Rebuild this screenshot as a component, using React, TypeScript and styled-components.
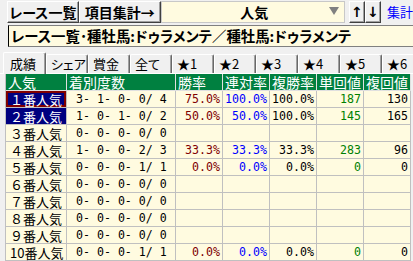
import React from "react";
import styled, { createGlobalStyle } from "styled-components";

const GlobalStyle = createGlobalStyle`
  html, body {
    margin: 0;
    padding: 0;
    background: #f0f0f0;
  }
  body {
    width: 413px;
    height: 261px;
    overflow: hidden;
    font-family: "Noto Sans CJK JP", "Noto Sans", sans-serif;
  }
`;

const JP = `"Noto Sans CJK JP", "Noto Sans", sans-serif`;
const MONO = `"DejaVu Sans Mono", "Liberation Mono", monospace`;

interface Row {
  label: string;
  counts: string;
  win?: string;
  quinella?: string;
  show?: string;
  winReturn?: string;
  showReturn?: string;
}

const rows: Row[] = [
  { label: "１番人気", counts: "3- 1- 0- 0/ 4", win: "75.0%", quinella: "100.0%", show: "100.0%", winReturn: "187", showReturn: "130" },
  { label: "２番人気", counts: "1- 0- 1- 0/ 2", win: "50.0%", quinella: "50.0%", show: "100.0%", winReturn: "145", showReturn: "165" },
  { label: "３番人気", counts: "0- 0- 0- 0/ 0" },
  { label: "４番人気", counts: "1- 0- 0- 2/ 3", win: "33.3%", quinella: "33.3%", show: "33.3%", winReturn: "283", showReturn: "96" },
  { label: "５番人気", counts: "0- 0- 0- 1/ 1", win: "0.0%", quinella: "0.0%", show: "0.0%", winReturn: "0", showReturn: "0" },
  { label: "６番人気", counts: "0- 0- 0- 0/ 0" },
  { label: "７番人気", counts: "0- 0- 0- 0/ 0" },
  { label: "８番人気", counts: "0- 0- 0- 0/ 0" },
  { label: "９番人気", counts: "0- 0- 0- 0/ 0" },
  { label: "10番人気", counts: "0- 0- 0- 1/ 1", win: "0.0%", quinella: "0.0%", show: "0.0%", winReturn: "0", showReturn: "0" },
];

const headers = ["人気", "着別度数", "勝率", "連対率", "複勝率", "単回値", "複回値"];
const tabs = ["成績", "シェア", "賞金", "全て", "★1", "★2", "★3", "★4", "★5", "★6"];

export default function App() {
  return (
    <UIWindow>
      <GlobalStyle />
      <UIToolbar>
        <UIToolButton $width={72}>レース一覧</UIToolButton>
        <UIToolButton $width={82}>項目集計→</UIToolButton>
        <UICombo>
          <UIComboText>人気</UIComboText>
          <UIComboArrow />
        </UICombo>
        <UISortGroup>
          <UISortButton>↑</UISortButton>
          <UISortButton>↓</UISortButton>
        </UISortGroup>
        <UILink>集計</UILink>
      </UIToolbar>

      <UITitle>レース一覧･種牡馬:ドゥラメンテ／種牡馬:ドゥラメンテ</UITitle>

      <UITabs>
        {tabs.map((t, i) => (
          <UITab key={t} $active={i === 0}>
            {t}
          </UITab>
        ))}
      </UITabs>

      <UIGrid>
        {headers.map((h) => (
          <UIHeadCell key={h}>{h}</UIHeadCell>
        ))}
        {rows.map((r, i) => (
          <React.Fragment key={r.label}>
            <UILabelCell $selected={i < 2} $focused={i === 0}>
              {r.label}
            </UILabelCell>
            <UICountCell>{r.counts}</UICountCell>
            <UINumCell $color="#800000">{r.win}</UINumCell>
            <UINumCell $color="#0000ff">{r.quinella}</UINumCell>
            <UINumCell $color="#000000">{r.show}</UINumCell>
            <UINumCell $color="#008000">{r.winReturn}</UINumCell>
            <UINumCell $color="#000000">{r.showReturn}</UINumCell>
          </React.Fragment>
        ))}
      </UIGrid>
    </UIWindow>
  );
}

const UIWindow = styled.div`
  display: flex;
  flex-direction: column;
  width: 413px;
  height: 261px;
  overflow: hidden;
  background: #f0f0f0;
`;

const UIToolbar = styled.div`
  display: flex;
  align-items: center;
  height: 24px;
  padding-left: 7px;
  box-sizing: border-box;
`;

const raised = `
  border-top: 1px solid #ffffff;
  border-left: 1px solid #ffffff;
  border-right: 1px solid #404040;
  border-bottom: 1px solid #404040;
  box-shadow: inset -1px -1px 0 #a0a0a0;
`;

const UIToolButton = styled.div<{ $width: number }>`
  ${raised}
  width: ${(p) => p.$width}px;
  height: 22px;
  box-sizing: border-box;
  display: flex;
  align-items: center;
  justify-content: center;
  font-family: ${JP};
  font-weight: 700;
  font-size: 14px;
  line-height: 16px;
  font-feature-settings: "palt";
  white-space: nowrap;
  color: #000;
  background: #f0f0f0;
`;

const UICombo = styled.div`
  display: flex;
  align-items: center;
  width: 185px;
  height: 22px;
  box-sizing: border-box;
  background: #fffbe0;
  border: 1px solid #c8c8c8;
`;

const UIComboText = styled.div`
  flex: 1;
  text-align: center;
  padding-left: 18px;
  font-family: ${JP};
  font-weight: 700;
  font-size: 14px;
  line-height: 16px;
  color: #000;
`;

const UIComboArrow = styled.div`
  width: 0;
  height: 0;
  margin: 0 5px 3px 0;
  border-left: 5px solid transparent;
  border-right: 5px solid transparent;
  border-top: 8px solid #808080;
`;

const UISortGroup = styled.div`
  display: flex;
  margin-left: 4px;
`;

const UISortButton = styled.div`
  ${raised}
  width: 16px;
  height: 22px;
  box-sizing: border-box;
  display: flex;
  align-items: center;
  justify-content: center;
  font-family: "DejaVu Sans", sans-serif;
  font-weight: 700;
  font-size: 14px;
  line-height: 16px;
  color: #000;
  background: #f0f0f0;
`;

const UILink = styled.div`
  margin-left: 6px;
  font-family: ${JP};
  font-size: 13px;
  line-height: 16px;
  color: #0000ff;
  white-space: nowrap;
`;

const UITitle = styled.div`
  margin: 1px 0 0 8px;
  height: 22px;
  box-sizing: border-box;
  display: flex;
  align-items: center;
  padding-left: 2px;
  white-space: nowrap;
  background: #fffbe0;
  border-top: 1px solid #808080;
  border-left: 1px solid #000;
  border-bottom: 1px solid #808080;
  font-family: ${JP};
  font-weight: 700;
  font-size: 14.4px;
  line-height: 16px;
  font-feature-settings: "palt";
  color: #000;
`;

const UITabs = styled.div`
  display: flex;
  align-items: flex-end;
  height: 23px;
  margin-top: 4px;
  padding-left: 4px;
  box-sizing: border-box;
  border-bottom: 1px solid #ffffff;
`;

const UITab = styled.div<{ $active: boolean }>`
  flex: none;
  width: ${(p) => (p.$active ? 43 : 42)}px;
  height: ${(p) => (p.$active ? 22 : 19)}px;
  margin-left: ${(p) => (p.$active ? -1 : 0)}px;
  margin-bottom: ${(p) => (p.$active ? -1 : 0)}px;
  box-sizing: border-box;
  padding-left: ${(p) => (p.$active ? 6 : 4)}px;
  display: flex;
  align-items: center;
  background: #f0f0f0;
  border-top: 1px solid #ffffff;
  border-left: 1px solid #ffffff;
  border-right: 1px solid #696969;
  box-shadow: inset -1px 0 0 #a0a0a0;
  border-radius: 2px 2px 0 0;
  font-family: ${JP};
  font-size: 13px;
  line-height: 16px;
  font-feature-settings: "palt";
  white-space: nowrap;
  color: #000;
  position: relative;
  z-index: ${(p) => (p.$active ? 1 : 0)};
`;

const UIGrid = styled.div`
  display: grid;
  grid-template-columns: 61px 109px 47px 47px 47px 47px 47px;
  grid-auto-rows: 17px;
  margin-left: 5px;
  border-left: 1px solid #c0c0c0;
  width: max-content;
`;

const cellBase = `
  box-sizing: border-box;
  height: 17px;
  border-right: 1px solid #c0c0c0;
  border-bottom: 1px solid #c0c0c0;
  display: flex;
  align-items: center;
  white-space: nowrap;
  line-height: 15px;
`;

const UIHeadCell = styled.div`
  ${cellBase}
  background: #008040;
  border-right-color: #e0e0e0;
  border-bottom-color: #e0e0e0;
  padding-left: 2px;
  font-family: ${JP};
  font-size: 14px;
  color: #ffffff;
`;

const UILabelCell = styled.div<{ $selected: boolean; $focused: boolean }>`
  ${cellBase}
  padding-left: 4px;
  background: ${(p) => (p.$selected ? "#000080" : "#fffbe0")};
  color: ${(p) => (p.$selected ? "#ffffff" : "#000000")};
  box-shadow: ${(p) => (p.$focused ? "inset 0 0 0 2px #800000" : "none")};
  font-family: ${JP};
  font-size: 13px;
`;

const UICountCell = styled.div`
  ${cellBase}
  padding-left: 9px;
  background: #fffbe0;
  font-family: ${MONO};
  font-size: 11.6px;
  color: #000;
`;

const UINumCell = styled.div<{ $color: string }>`
  ${cellBase}
  justify-content: flex-end;
  padding-right: 2px;
  background: #fffbe0;
  font-family: ${MONO};
  font-size: 11.6px;
  color: ${(p) => p.$color};
`;
